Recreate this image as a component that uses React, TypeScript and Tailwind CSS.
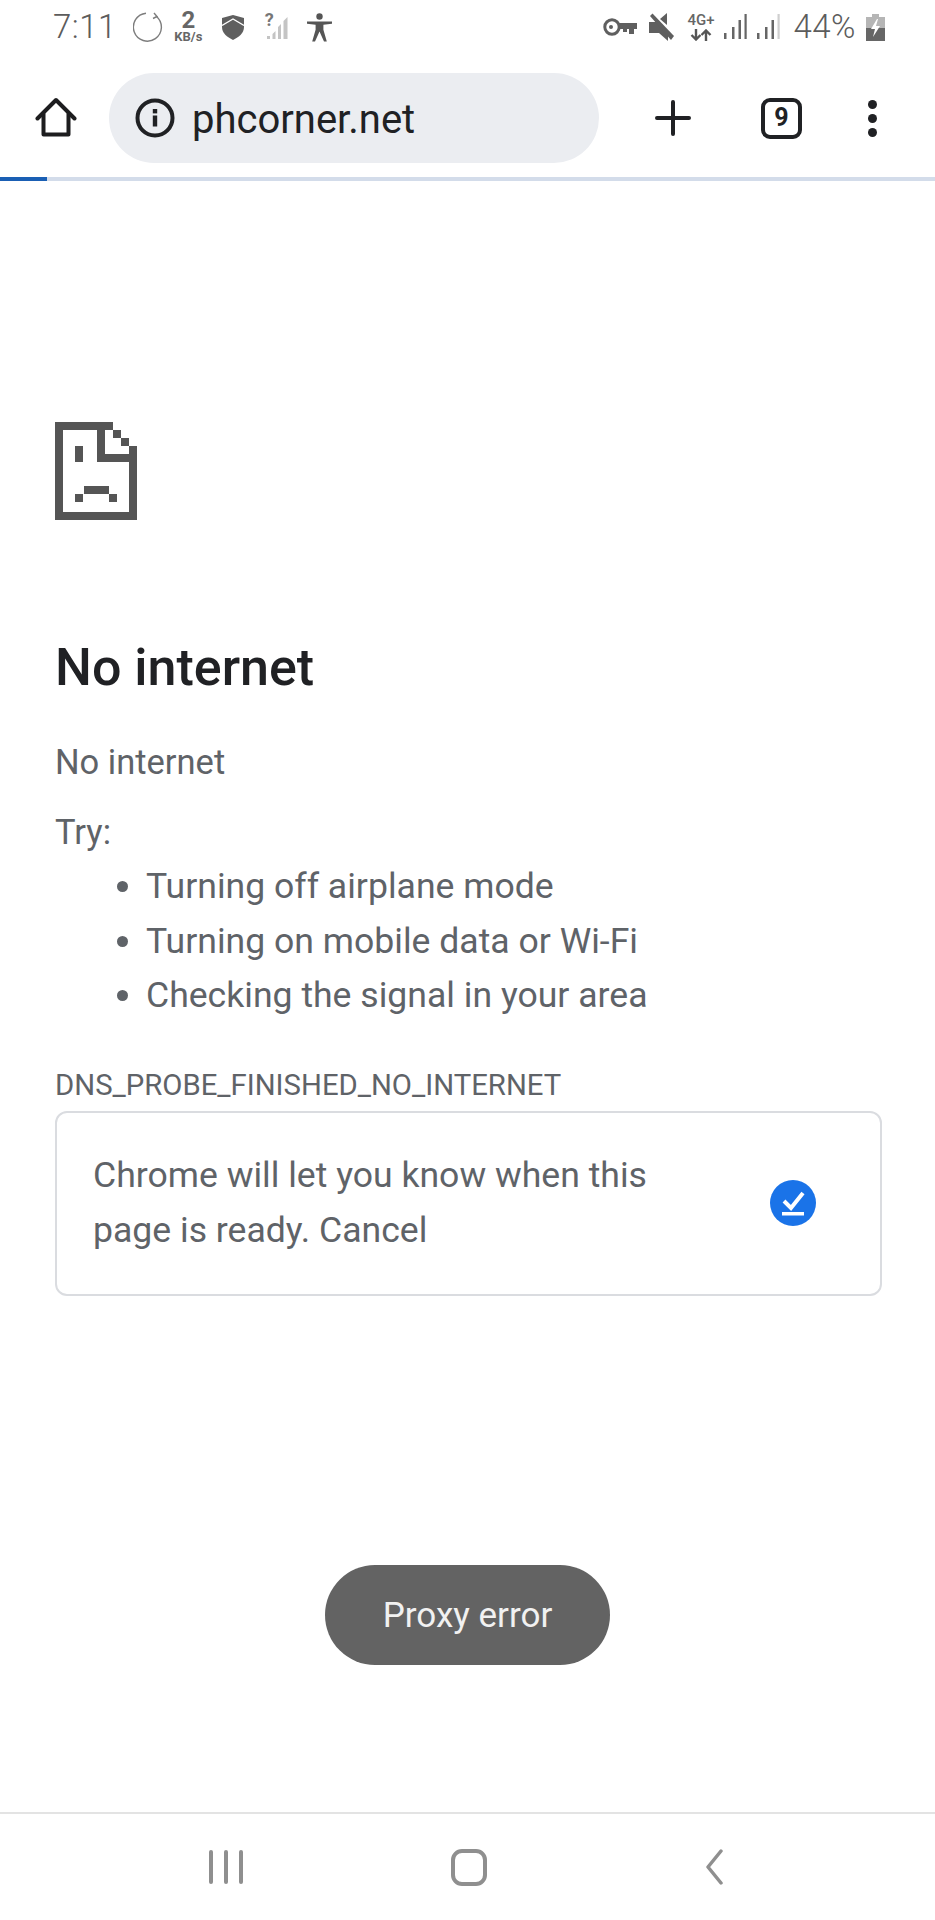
const LoadingRing = () => (
  <svg width="30" height="30" viewBox="0 0 30 30" fill="none" stroke="#7d7d7d" strokeWidth="1.4">
    <path d="M23.500 4.500A14 14 0 1 1 13 1.200" />
    <path d="M21 1l3 3.500-4 2" />
  </svg>
);

const ShieldIcon = () => (
  <svg width="22" height="25" viewBox="0 0 22 25">
    <path d="M11 0L22 3v9c0 6-5 10-11 13C5 22 0 18 0 12V3z" fill="#5f5f5f" />
    <path d="M0 10.500L11 4l11 6.500" fill="none" stroke="#fff" strokeWidth="1.400" />
  </svg>
);

const SignalBars = ({ lastDim }: { lastDim?: boolean }) => (
  <svg width="24" height="26" viewBox="0 0 24 26" fill="#666">
    <rect x="1" y="19" width="2.500" height="6" />
    <rect x="9" y="13" width="2.500" height="12" />
    <rect x="15.500" y="6" width="2.500" height="19" />
    <rect x="21.500" y="0" width="2.200" height="25" fill={lastDim ? "#cfcfcf" : "#666"} />
  </svg>
);

const UnknownSignal = () => (
  <div className="relative w-[24px] h-[26px]">
    <span className="absolute left-0 top-[-4px] text-[18px] leading-[20px] font-bold text-[#777]">?</span>
    <svg className="absolute left-0 top-0" width="24" height="26" viewBox="0 0 24 26">
      <path d="M2 25h3v-3H2zM7.500 25h3v-8l-3 3zM13 25h3V10l-3 3zM18.500 25h4V3l-4 4z" fill="#c4c4c4" />
    </svg>
  </div>
);

const PersonIcon = () => (
  <svg width="25" height="29" viewBox="0 0 25 29" fill="#555">
    <circle cx="12.500" cy="3.500" r="3.200" />
    <path d="M0 8.500h25v2.200l-8.600 1v5l3.400 11.800h-2.800L12.500 18.500l-4.500 10H5.200l3.400-11.800v-5L0 10.700z" />
  </svg>
);

const KeyIcon = () => (
  <svg width="34" height="18" viewBox="0 0 34 18" fill="none">
    <circle cx="9" cy="9" r="7.200" stroke="#5f5f5f" strokeWidth="3" />
    <circle cx="8" cy="9" r="2" fill="#5f5f5f" />
    <path d="M16 5h18v6h-3v5h-5v-5h-2v3h-4v-3h-4z" fill="#5f5f5f" />
  </svg>
);

const MuteIcon = () => (
  <svg width="26" height="28" viewBox="0 0 26 28" fill="#5f5f5f">
    <path d="M1 9h6l2-2 11 12v9l-9-8H1z" />
    <path d="M12 6l7-6v12z" />
    <path d="M2 3l2.500-2.500L26 23l-3 4z" />
  </svg>
);

const DataArrows = () => (
  <svg width="22" height="12" viewBox="0 0 22 12" fill="none" stroke="#555" strokeWidth="2.400">
    <path d="M6 0v10M1.500 6l4.500 4.500L10.500 6" />
    <path d="M16 12V2M11.500 6L16 1.500 20.500 6" />
  </svg>
);

const BatteryIcon = () => (
  <svg width="19" height="27" viewBox="0 0 19 27">
    <rect x="6" y="0" width="7" height="3" fill="#b5b5b5" />
    <rect x="0" y="3" width="19" height="11" fill="#b5b5b5" />
    <rect x="0" y="14" width="19" height="13" fill="#666" />
    <path d="M11 5L5 15h4l-2 8 7-11h-4l2-7z" fill="#fff" />
  </svg>
);

const HomeIcon = () => (
  <svg width="42" height="42" viewBox="0 0 42 42" fill="none" stroke="#1d1d1f" strokeWidth="4" strokeLinejoin="round" strokeLinecap="round">
    <path d="M2.500 21.500L21 3l18.500 18.500" />
    <path d="M8.500 17v20.500h25V17" />
  </svg>
);

const InfoIcon = () => (
  <svg width="40" height="40" viewBox="0 0 40 40" fill="none">
    <circle cx="20" cy="20" r="17.500" stroke="#202124" strokeWidth="4" />
    <rect x="17.800" y="17.500" width="4.400" height="11" fill="#202124" />
    <rect x="17.800" y="11" width="4.400" height="4.400" fill="#202124" />
  </svg>
);

const SadPage = () => (
  <svg width="82" height="98" viewBox="0 0 82 98" fill="#555555">
    <rect x="0" y="0" width="58" height="8" />
    <rect x="0" y="0" width="8" height="98" />
    <rect x="0" y="90" width="82" height="8" />
    <rect x="74" y="24" width="8" height="74" />
    <rect x="42" y="0" width="8" height="40" />
    <rect x="42" y="32" width="32" height="8" />
    <rect x="58" y="8" width="8" height="8" />
    <rect x="66" y="16" width="8" height="8" />
    <rect x="20" y="24" width="8" height="16" />
    <rect x="29" y="64" width="25" height="8" />
    <rect x="20" y="72" width="8" height="8" />
    <rect x="54" y="72" width="8" height="8" />
  </svg>
);

const App = () => {
  return (
    <div className="relative min-h-[1920px] flex flex-col bg-white font-['Roboto',sans-serif] overflow-hidden">
      {/* Status bar */}
      <div className="h-[54px] flex items-center justify-between pl-[53px] pr-[50px]">
        <div className="flex items-center">
          <span className="text-[33px] font-light text-[#5c5c5c] tracking-[0.5px]">7:11</span>
          <div className="ml-[16px]"><LoadingRing /></div>
          <div className="ml-[9px] w-[33px] flex flex-col items-center text-[#666] font-bold">
            <span className="text-[24px] leading-[19px]">2</span>
            <span className="text-[13px] leading-[13px] whitespace-nowrap">KB/s</span>
          </div>
          <div className="ml-[17px]"><ShieldIcon /></div>
          <div className="ml-[21px]"><UnknownSignal /></div>
          <div className="ml-[18px]"><PersonIcon /></div>
        </div>
        <div className="flex items-center">
          <KeyIcon />
          <div className="ml-[11px]"><MuteIcon /></div>
          <div className="ml-[13px] w-[27px] flex flex-col items-center text-[#666] gap-[1px]">
            <span className="text-[15px] leading-[15px] font-medium whitespace-nowrap">4G+</span>
            <DataArrows />
          </div>
          <div className="ml-[9px]"><SignalBars /></div>
          <div className="ml-[9px]"><SignalBars lastDim /></div>
          <span className="ml-[13px] text-[33px] font-light text-[#5c5c5c] tracking-[0.5px]">44%</span>
          <div className="ml-[10px]"><BatteryIcon /></div>
        </div>
      </div>

      {/* Toolbar */}
      <div className="mt-[19px] h-[90px] flex items-center">
        <div className="ml-[35px]"><HomeIcon /></div>
        <div className="ml-[32px] w-[490px] h-[90px] rounded-full bg-[#ebedf1] flex items-center pl-[26px]">
          <InfoIcon />
          <span className="ml-[17px] text-[40px] leading-[46px] pt-[3px] text-[#202124]">phcorner.net</span>
        </div>
        <svg className="ml-[56px]" width="36" height="36" viewBox="0 0 36 36" stroke="#202124" strokeWidth="4" strokeLinecap="round">
          <path d="M18 2v32M2 18h32" />
        </svg>
        <div className="ml-[70px] w-[41px] h-[41px] rounded-[9px] border-[4px] border-[#202124] flex items-center justify-center text-[25px] font-bold text-[#202124]">
          9
        </div>
        <div className="ml-[66px] flex flex-col gap-[5px]">
          <span className="w-[9px] h-[9px] rounded-full bg-[#202124]" />
          <span className="w-[9px] h-[9px] rounded-full bg-[#202124]" />
          <span className="w-[9px] h-[9px] rounded-full bg-[#202124]" />
        </div>
      </div>

      {/* Load progress */}
      <div className="mt-[14px] h-[4px] bg-[#d3dcea]">
        <div className="h-full w-[47px] bg-[#1a5fb4]" />
      </div>

      {/* Error page */}
      <main className="flex-1 pl-[55px] pr-[53px] pt-[241px]">
        <SadPage />
        <h1 className="mt-[118px] text-[52px] leading-[60px] font-medium text-[#202124]">No internet</h1>
        <p className="mt-[41px] text-[34.500px] leading-[46px] text-[#5f6368]">No internet</p>
        <p className="mt-[24px] text-[34.500px] leading-[46px] text-[#5f6368]">Try:</p>
        <ul className="list-disc pl-[91px] mt-[4px] text-[35.600px] leading-[54.500px] text-[#5f6368]">
          <li>Turning off airplane mode</li>
          <li>Turning on mobile data or Wi-Fi</li>
          <li>Checking the signal in your area</li>
        </ul>
        <p className="mt-[42px] text-[29.300px] leading-[40px] text-[#5f6368]">DNS_PROBE_FINISHED_NO_INTERNET</p>

        <div className="mt-[6px] h-[185px] rounded-[12px] border-2 border-[#dadce0] flex items-center justify-between pl-[36px] pr-[64px]">
          <p className="w-[600px] text-[35.600px] leading-[55px] text-[#5f6368]">
            Chrome will let you know when this page is ready. Cancel
          </p>
          <svg width="46" height="46" viewBox="0 0 46 46" fill="none">
            <circle cx="23" cy="23" r="23" fill="#1a73e8" />
            <path d="M14 21l7 7 12-15" stroke="#fff" strokeWidth="4" />
            <rect x="12" y="32" width="22" height="3.500" fill="#fff" />
          </svg>
        </div>
      </main>

      {/* Toast over the page */}
      <div className="absolute left-[325px] top-[1565px] w-[285px] h-[100px] rounded-full bg-[#636363] flex items-center justify-center pt-[3px] text-[35px] text-[#f1f1f1]">
        Proxy error
      </div>

      {/* Android nav bar */}
      <nav className="h-[108px] border-t-2 border-[#e3e3e3] flex items-center">
        <div className="ml-[209px] flex gap-[11px]">
          <span className="w-[4px] h-[34px] rounded-full bg-[#8f8f8f]" />
          <span className="w-[4px] h-[34px] rounded-full bg-[#8f8f8f]" />
          <span className="w-[4px] h-[34px] rounded-full bg-[#8f8f8f]" />
        </div>
        <div className="ml-[208px] w-[36px] h-[37px] rounded-[11px] border-[4px] border-[#8f8f8f]" />
        <svg className="ml-[215px]" width="22" height="36" viewBox="0 0 22 36" fill="none" stroke="#8f8f8f" strokeWidth="3.500" strokeLinecap="round" strokeLinejoin="round">
          <path d="M19 2L6 18l13 16" />
        </svg>
      </nav>
    </div>
  );
};

export default App;
